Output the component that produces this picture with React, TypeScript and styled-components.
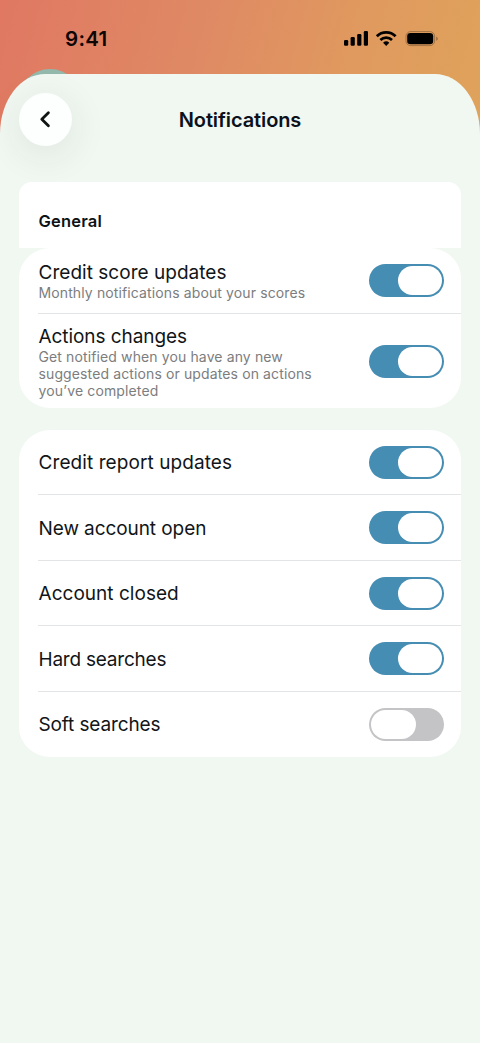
import React, { useState } from "react";
import styled, { createGlobalStyle } from "styled-components";

const GlobalStyle = createGlobalStyle`
  * { box-sizing: border-box; }
  body { margin: 0; font-family: Inter, "Liberation Sans", sans-serif; }
`;

const Screen = styled.div`
  position: relative;
  display: flex;
  flex-direction: column;
  width: 480px;
  height: 1043px;
  overflow: hidden;
  background: linear-gradient(105deg, #e07862 0%, #df8a64 42%, #e0985f 68%, #dfa35b 100%) 0 0 / 100% 140px no-repeat;
`;

const BackdropDisc = styled.div`
  position: absolute;
  left: 18px;
  top: 69px;
  width: 64px;
  height: 64px;
  border-radius: 50%;
  background: #93b8ac;
`;

const StatusBar = styled.header`
  display: flex;
  align-items: center;
  justify-content: space-between;
  height: 74px;
  padding: 3px 41px 0 65px;
`;

const Clock = styled.span`
  font-size: 20.5px;
  font-weight: 570;
  letter-spacing: 0.3px;
  color: #0d0606;
`;

const Sheet = styled.main`
  position: relative;
  flex: 1;
  display: flex;
  flex-direction: column;
  padding: 0 19px;
  background: #f1f8f2;
  border-radius: 45px 45px 0 0 / 60px 60px 0 0;
`;

const TitleBar = styled.div`
  display: grid;
  grid-template-columns: 53px 1fr 53px;
  align-items: center;
  height: 53px;
  margin: 19px 0 36px;
`;

const BackButton = styled.button`
  display: grid;
  place-items: center;
  width: 53px;
  height: 53px;
  padding: 0 1px 1px 0;
  border: 0;
  border-radius: 50%;
  background: #fcfffd;
  box-shadow: 0 8px 34px 6px rgba(40, 50, 45, 0.065);
`;

const Title = styled.h1`
  margin: 0;
  text-align: center;
  font-size: 20px;
  font-weight: 570;
  letter-spacing: -0.1px;
  color: #0c121c;
`;

const SectionHeader = styled.h2`
  height: 66px;
  margin: 0;
  padding: 28px 20px 0 19.5px;
  border-radius: 13px 13px 0 0;
  background: #fff;
  font-size: 16.5px;
  line-height: 22px;
  font-weight: 600;
  letter-spacing: 0.2px;
  color: #0c1216;
`;

const Card = styled.section`
  margin-bottom: 22px;
  border-radius: 32px / 30px;
  background: #fff;
`;

const Row = styled.div<{ $height: number }>`
  display: flex;
  align-items: center;
  justify-content: space-between;
  height: ${(p) => p.$height}px;
  margin-left: 19px;
  padding-right: 17px;
  & + & {
    border-top: 1px solid #e3e4e5;
  }
`;

const RowText = styled.div`
  display: flex;
  flex-direction: column;
  padding-left: 0.5px;
`;

const Label = styled.span<{ $tracking: number }>`
  padding-top: 1px;
  font-size: 19px;
  line-height: 23px;
  letter-spacing: ${(p) => p.$tracking}px;
  white-space: nowrap;
  color: #111518;
`;

const Description = styled.span`
  font-size: 14px;
  line-height: 17px;
  letter-spacing: 0.12px;
  white-space: pre-line;
  color: #7b7d7e;
`;

const Track = styled.button<{ $on: boolean }>`
  display: flex;
  align-items: center;
  justify-content: ${(p) => (p.$on ? "flex-end" : "flex-start")};
  flex: none;
  width: 75px;
  height: 33px;
  padding: 0 2px;
  border: 0;
  border-radius: 17px;
  background: ${(p) => (p.$on ? "#458db3" : "#c4c4c7")};
`;

const Knob = styled.span`
  width: 44.5px;
  height: 29px;
  border-radius: 15px;
  background: #fff;
`;

type Setting = {
  label: string;
  height: number;
  on: boolean;
  tracking?: number;
  description?: string;
};

const general: Setting[] = [
  {
    label: "Credit score updates",
    height: 65.4,
    on: true,
    tracking: 0.03,
    description: "Monthly notifications about your scores",
  },
  {
    label: "Actions changes",
    height: 94.6,
    on: true,
    tracking: -0.07,
    description: "Get notified when you have any new\nsuggested actions or updates on actions\nyou’ve completed",
  },
];

const report: Setting[] = [
  { label: "Credit report updates", height: 64.4, on: true, tracking: 0.08 },
  { label: "New account open", height: 65.4, on: true, tracking: -0.08 },
  { label: "Account closed", height: 65.6, on: true, tracking: 0.03 },
  { label: "Hard searches", height: 65.6, on: true, tracking: -0.22 },
  { label: "Soft searches", height: 65.8, on: false, tracking: -0.12 },
];

function SettingRow({ setting }: { setting: Setting }) {
  const [on, setOn] = useState(setting.on);
  return (
    <Row $height={setting.height}>
      <RowText>
        <Label $tracking={setting.tracking ?? 0}>{setting.label}</Label>
        {setting.description && <Description>{setting.description}</Description>}
      </RowText>
      <Track $on={on} role="switch" aria-checked={on} aria-label={setting.label} onClick={() => setOn(!on)}>
        <Knob />
      </Track>
    </Row>
  );
}

function StatusIcons() {
  return (
    <svg width="95" height="18" viewBox="0 0 95 18">
      <rect x="0" y="10" width="4.2" height="5.8" rx="1.2" />
      <rect x="6.6" y="7" width="4.2" height="8.8" rx="1.2" />
      <rect x="13.2" y="4" width="4.2" height="11.8" rx="1.2" />
      <rect x="19.8" y="1" width="4.2" height="14.8" rx="1.2" />
      <g fill="none" stroke="#000" strokeWidth="2.7">
        <path d="M32.8 6.3a13.4 13.4 0 0 1 18.8 0" />
        <path d="M36.4 10a8.3 8.3 0 0 1 11.6 0" />
      </g>
      <path d="M42.2 16l-3.1-3.2a4.5 4.5 0 0 1 6.2 0z" />
      <rect x="62" y="1.6" width="28.6" height="14" rx="4.6" fill="none" stroke="#000" strokeOpacity="0.3" strokeWidth="0.9" />
      <rect x="63.2" y="3" width="26" height="11.2" rx="3.3" />
      <path d="M92.4 6.4v4.4c1.7-.8 1.7-3.6 0-4.4z" fillOpacity="0.4" />
    </svg>
  );
}

export default function App() {
  return (
    <>
      <GlobalStyle />
      <Screen>
        <BackdropDisc />
        <StatusBar>
          <Clock>9:41</Clock>
          <StatusIcons />
        </StatusBar>
        <Sheet>
          <TitleBar>
            <BackButton aria-label="Back">
              <svg width="16" height="20" viewBox="0 0 16 20" fill="none" stroke="#101412" strokeWidth="2.8" strokeLinecap="round" strokeLinejoin="round">
                <path d="M11.4 3.7L4.8 10.2l6.6 6.5" />
              </svg>
            </BackButton>
            <Title>Notifications</Title>
          </TitleBar>
          <SectionHeader>General</SectionHeader>
          <Card>
            {general.map((s) => (
              <SettingRow key={s.label} setting={s} />
            ))}
          </Card>
          <Card>
            {report.map((s) => (
              <SettingRow key={s.label} setting={s} />
            ))}
          </Card>
        </Sheet>
      </Screen>
    </>
  );
}
